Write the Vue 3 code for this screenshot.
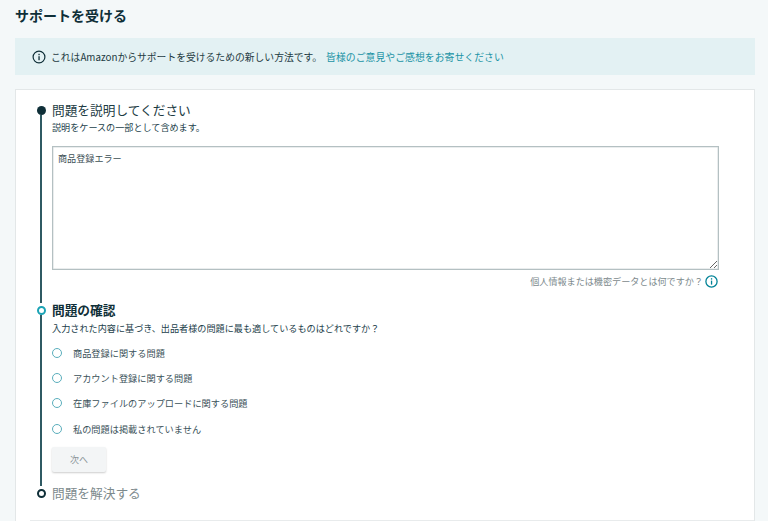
<script setup>
const options = ['商品登録に関する問題', 'アカウント登録に関する問題', '在庫ファイルのアップロードに関する問題', '私の問題は掲載されていません']
</script>

<template>
  <div class="page">
    <h1 class="title">サポートを受ける</h1>
    <div class="banner">
      <svg class="banner-icon" width="14" height="14" viewBox="0 0 14 14">
        <circle cx="7" cy="7" r="5.9" fill="none" stroke="#0f2f38" stroke-width="1.2" />
        <rect x="6.4" y="6.2" width="1.3" height="4" fill="#0f2f38" />
        <rect x="6.4" y="3.8" width="1.3" height="1.4" fill="#0f2f38" />
      </svg>
      <span class="banner-text">これはAmazonからサポートを受けるための新しい方法です。</span>
      <a class="banner-link">皆様のご意見やご感想をお寄せください</a>
    </div>
    <div class="card">
      <section class="step step-one">
        <div class="rail"><span class="dot dot-solid"></span><span class="line"></span></div>
        <div class="body">
          <h2 class="step-title">問題を説明してください</h2>
          <p class="step-sub">説明をケースの一部として含めます。</p>
          <textarea class="box" readonly>商品登録エラー</textarea>
          <div class="hint">
            <span>個人情報または機密データとは何ですか？</span>
            <svg width="13" height="13" viewBox="0 0 13 13">
              <circle cx="6.5" cy="6.5" r="5.6" fill="none" stroke="#008296" stroke-width="1.3" />
              <rect x="5.9" y="5.6" width="1.3" height="4" fill="#008296" />
              <rect x="5.9" y="3.2" width="1.3" height="1.4" fill="#008296" />
            </svg>
          </div>
        </div>
      </section>
      <section class="step step-two">
        <div class="rail"><span class="dot dot-active"></span><span class="line"></span></div>
        <div class="body">
          <h2 class="step-title strong">問題の確認</h2>
          <p class="step-sub wide">入力された内容に基づき、出品者様の問題に最も適しているものはどれですか？</p>
          <ul class="options">
            <li v-for="o in options" :key="o" class="option">
              <span class="radio"></span>
              <span>{{ o }}</span>
            </li>
          </ul>
          <button class="next" type="button">次へ</button>
        </div>
      </section>
      <section class="step step-three">
        <div class="rail"><span class="dot dot-open"></span></div>
        <div class="body">
          <h2 class="step-title muted">問題を解決する</h2>
        </div>
      </section>
      <div class="divider"></div>
    </div>
  </div>
</template>

<style>
html, body { margin: 0; background: #f4f8f9; overflow: hidden; }
</style>

<style scoped>
.page {
  height: 521px;
  overflow: hidden;
  box-sizing: border-box;
  padding: 6px 13px 0 15px;
  background: #f4f8f9;
  font-family: "Noto Sans CJK JP", "Noto Sans", sans-serif;
  color: #0f2f38;
}
.title {
  margin: 0 0 13px;
  font-size: 14px;
  line-height: 19px;
  font-weight: 700;
  color: #0f2f38;
}
.banner {
  height: 37px;
  box-sizing: border-box;
  display: flex;
  align-items: center;
  padding-left: 17px;
  background: #e3f1f3;
  font-size: 9.8px;
}
.banner-icon { margin-right: 5px; flex: none; }
.banner-text { width: 275px; flex: none; color: #1d3a42; white-space: nowrap; }
.banner-link { color: #1a93a5; font-size: 9.9px; }
.card {
  margin-top: 14px;
  height: 460px;
  box-sizing: border-box;
  background: #fff;
  border: 1px solid #e3e7e8;
  padding-top: 13px;
  padding-left: 19px;
}
.step { display: flex; }
.step-one { height: 200px; }
.step-two { height: 183px; }
.rail {
  width: 12px;
  margin-right: 5px;
  flex: none;
  display: flex;
  flex-direction: column;
  align-items: center;
}
.dot { box-sizing: border-box; width: 9px; height: 9px; border-radius: 50%; flex: none; margin-top: 3px; }
.dot-solid { background: #0f2f38; }
.dot-active { background: #fff; border: 2px solid #1ba3b5; }
.dot-open { background: #fff; border: 2px solid #0f2f38; }
.line { flex: 1; width: 2px; background: #2f5a63; }
.body { flex: 1; min-width: 0; }
.step-title {
  margin: 0;
  font-size: 12.7px;
  line-height: 14px;
  font-weight: 400;
  color: #1c3b43;
}
.step-title.strong { font-weight: 700; color: #0f2f38; }
.step-title.muted { color: #7d8a8d; }
.step-sub {
  margin: 4px 0 0;
  font-size: 9.1px;
  line-height: 12px;
  color: #22404a;
}
.step-sub.wide { margin-top: 5px; font-size: 9.15px; }
.box {
  display: block;
  box-sizing: border-box;
  width: 667px;
  height: 124px;
  margin-top: 13px;
  padding: 5px;
  border: 1px solid #b4c0c2;
  border-radius: 0;
  box-shadow: inset 0 0 0 0.5px #d5dcdd;
  outline: none;
  font-family: inherit;
  font-size: 9.1px;
  line-height: 13px;
  color: #3c4f55;
  background: #fff;
}
.hint {
  width: 666px;
  margin-top: 5px;
  display: flex;
  justify-content: flex-end;
  align-items: center;
  gap: 2px;
  font-size: 9.1px;
  line-height: 13px;
  color: #7d8a8d;
}
.options { list-style: none; margin: 6px 0 0; padding: 0; }
.option {
  height: 25.3px;
  display: flex;
  align-items: center;
  font-size: 9.2px;
  color: #3a5159;
}
.radio {
  box-sizing: border-box;
  width: 10px;
  height: 10px;
  margin-right: 11px;
  border: 1.2px solid #5aaebc;
  border-radius: 50%;
  background: #fff;
}
.next {
  display: block;
  width: 54px;
  height: 25px;
  margin-top: 6px;
  border: none;
  border-radius: 2px;
  background: #f3f5f6;
  box-shadow: 0 1px 2px rgba(0, 0, 0, 0.2);
  font-family: inherit;
  font-size: 9px;
  color: #8a9396;
}
.divider {
  height: 1px;
  margin: 20px 0 0 -5px;
  background: #e8ebec;
}
</style>
